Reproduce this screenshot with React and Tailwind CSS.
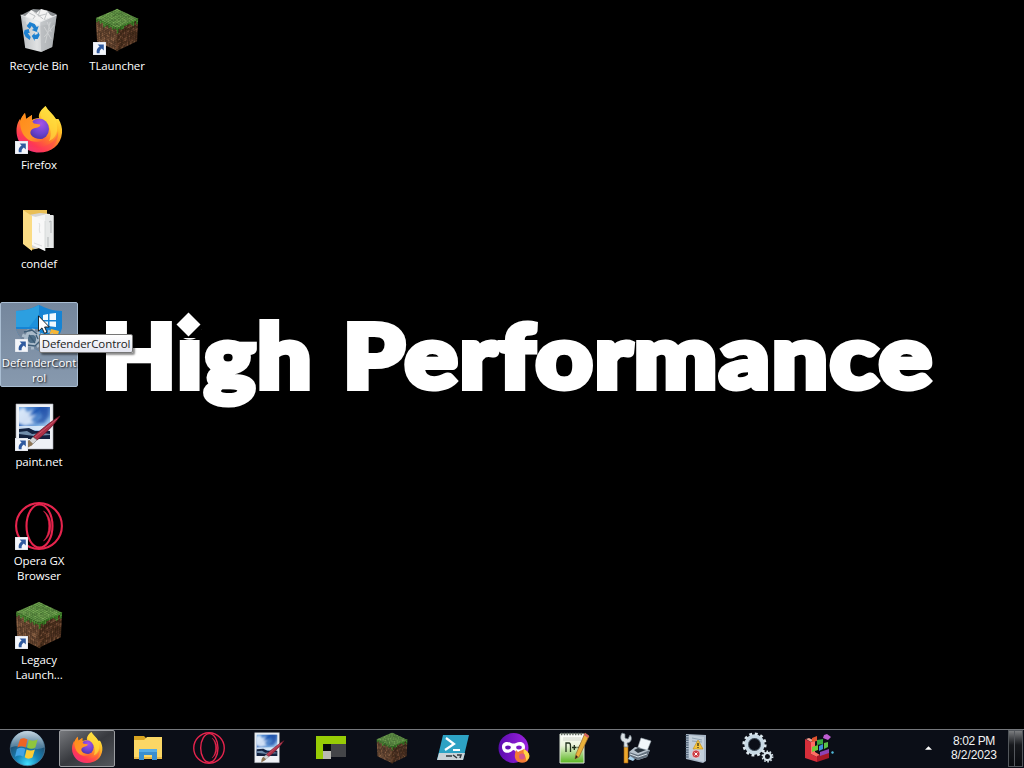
import React from "react";

function Shortcut() {
  return (
    <svg viewBox="0 0 13 13" className="absolute bottom-0 left-0 h-[13px] w-[13px]">
      <rect width="13" height="13" fill="#f4f6fa" stroke="#c3cad6" strokeWidth=".6" />
      <path d="M4.6 2.4H10.8V8.4L8.8 6.6C7 7.8 6.5 9 6.6 11.2H3.8C3.2 8.2 4.2 5.900 6.6 4.500Z" fill="#2f5a9f" />
    </svg>
  );
}

function noise(a, b, s) {
  const v = Math.sin(a * 127.1 + b * 311.7 + s * 74.7) * 43758.5453;
  return v - Math.floor(v);
}

function Face({ m, seed, grass, colors }) {
  const cells = [];
  for (let x = 0; x < 12; x++) {
    for (let y = 0; y < 12; y++) {
      const n = noise(x, y, seed);
      const depth = 1 + Math.floor(noise(x, 3, seed + 5) * 2.4);
      const set = grass && y < depth ? grass : colors;
      cells.push(
        <rect key={`${x}-${y}`} x={x} y={y} width="1.06" height="1.06" fill={set[Math.floor(n * set.length)]} />
      );
    }
  }
  return <g transform={m}>{cells}</g>;
}

function Cube({ className }) {
  return (
    <svg viewBox="0 0 48 48" className={className}>
      <Face m="matrix(1.917 -.833 1.917 .9 1 11)" seed={1} colors={["#6ea34d", "#639847", "#78ad56", "#699f4b", "#5c9042"]} />
      <Face m="matrix(1.917 .917 .1 2.1 1 11)" seed={2} grass={["#48852f", "#529138", "#407a2a"]} colors={["#6e4c35", "#7e583d", "#5b3e2a", "#8a6144", "#64442f"]} />
      <Face m="matrix(1.917 -.917 -.1 2.1 24 22)" seed={3} grass={["#3e8026", "#357322", "#4a8c32"]} colors={["#543524", "#67422c", "#452c1a", "#724d35", "#4b301e"]} />
    </svg>
  );
}

function RecycleBin() {
  return (
    <svg viewBox="0 0 48 48" className="h-12 w-12">
      <defs>
        <linearGradient id="bin" x1="0" x2="1">
          <stop offset="0" stopColor="#c6cacd" />
          <stop offset=".45" stopColor="#f1f3f4" />
          <stop offset="1" stopColor="#b7bbbe" />
        </linearGradient>
      </defs>
      <g transform="translate(1.200)">
        <path d="M5 8L17 2L30 3L40 7L39 15L24 19L7 14Z" fill="#8b8f92" />
        <path d="M9 9L15 3L20 6L25 2L31 4L34 8L38 10L34 18L10 17Z" fill="#f3f3f3" />
        <path d="M13 6L19 9L16 13M24 3L22 9L30 7M31 5L28 13L36 11M18 5L27 12" fill="none" stroke="#c0c3c5" />
        <path d="M4.500 8L24 15L40.500 8L36 40L25 45L9 41Z" fill="url(#bin)" fillOpacity=".93" />
        <path d="M24 15L40.500 8L36 40L25 45Z" fill="#a9adb0" fillOpacity=".55" />
        <path d="M4.500 8L24 15L40.500 8" fill="none" stroke="#e8eaeb" strokeWidth=".9" />
        <path d="M28 20L35 32M34 15L29 36M38 18L28 30M31 15L35 25" stroke="#d8dadb" strokeWidth="1" opacity=".7" />
        <g fill="#1d80d0" transform="translate(-1.500 -2)">
          <path d="M12 21L15 17L20 19L22 22L24 21L22 27L17 25L19 24L17 21L15 24Z" />
          <path d="M10 25L14 24L15 28L13 28L16 32L15 35L11 32L9 28Z" />
          <path d="M17 31L20 28L20 30L23 29L23 26L25 30L23 34L20 34L20 36Z" />
        </g>
      </g>
    </svg>
  );
}

function Firefox({ className, id }) {
  return (
    <svg viewBox="0 0 48 48" className={className}>
      <defs>
        <linearGradient id={`${id}a`} x1=".85" y1=".1" x2=".25" y2="1">
          <stop offset="0" stopColor="#fff14b" />
          <stop offset=".3" stopColor="#ffbd27" />
          <stop offset=".58" stopColor="#ff7130" />
          <stop offset=".8" stopColor="#ff3853" />
          <stop offset="1" stopColor="#e72d87" />
        </linearGradient>
        <radialGradient id={`${id}b`} cx=".6" cy=".25" r=".8">
          <stop offset="0" stopColor="#a553e6" />
          <stop offset=".6" stopColor="#6b42cf" />
          <stop offset="1" stopColor="#4b329f" />
        </radialGradient>
        <linearGradient id={`${id}c`} x1="0" y1="0" x2="1" y2="1">
          <stop offset="0" stopColor="#ff8a18" />
          <stop offset=".6" stopColor="#ff9728" />
          <stop offset="1" stopColor="#ff5937" />
        </linearGradient>
      </defs>
      <path d="M30.500 0C33 5 38 8 41 13L43.500 13C46 17 47.500 22 47 27C46 39 36.500 46.500 24 46.500C11 46.500 1.500 37 1.500 25C1.500 19 3.500 15 5 13L5.500 16C6.500 12 8 9 10 7L11 13L17 9L17 14C18 13 21 12 24 12C23 7 27 3 30.500 0Z" fill={`url(#${id}a)`} />
      <path d="M30.500 0C34 6 42 10 42 20C43 28 39 33 34 35C37 29 36 21 31 16C27 13 24 10 26 5C27 3 29 2 30.500 0Z" fill="#ffdc3f" opacity=".7" />
      <ellipse cx="24" cy="23" rx="10" ry="10.500" fill={`url(#${id}b)`} />
      <path d="M5 15C6.500 11 8 9 10 7L11 13L17 9L17 14.500C18 16 18 17 19 17.500L25 18.500C26 19.500 24 21.500 20 22C16 23 14.500 26 16 29C19 33 26 34 31 32C29 35 22 37 16 35C9 32 5 25 5 15Z" fill={`url(#${id}c)`} />
      <path d="M3 28C7 40 20 44 30 40C37 38 42 32 43 25C44 37 36 46 24 46C13 46 5 39 3 28Z" fill="#ff3d5b" opacity=".38" />
    </svg>
  );
}

function OpenFolder() {
  return (
    <svg viewBox="0 0 48 48" className="h-12 w-12">
      <path d="M8 5H32V41L16 45L8 38Z" fill="#e9bf57" />
      <path d="M14 10L25 8L35 9V40L20 44L14 41Z" fill="#d6d6d6" />
      <path d="M20 12L32 9L38.500 11V43L30 43L20 41Z" fill="#f4f4f4" />
      <path d="M30 10L38.500 10V43L30 43Z" fill="#e6e8e8" />
      <path d="M34 17L36 16V28M33 32V42" stroke="#b1b5b7" fill="none" />
      <path d="M8 5L17 11V46L8 39Z" fill="#fbdc85" />
      <path d="M17 40L30 46V16L21 12L17 11Z" fill="#f8f8f8" />
      <path d="M30 16V46" stroke="#cfd2d3" strokeWidth=".7" />
      <path d="M24 18C26 20 23 24 25 28M19 38L27 41" stroke="#d4d7d8" strokeWidth=".8" fill="none" />
    </svg>
  );
}

function Defender() {
  return (
    <svg viewBox="0 0 48 48" className="h-12 w-12">
      <path d="M1 7C10 7 18 4 24 1C31 4 38 7 47 7V24C45 34 36 40 24 47C12 40 3 34 1 24Z" fill="#1684d4" />
      <path d="M1 7C10 7 18 4 24 1V23H1Z" fill="#2c9fe0" />
      <path d="M1 23H24V10L14 23Z" fill="#1d91dc" />
      <path d="M28 11L33 10V16H28ZM34.500 9.800L41 9V16H34.500ZM28 17.500H33V22L28 21.500ZM34.500 17.500H41V23L34.500 22.300Z" fill="#f0faff" />
      <path d="M36 25L44 27L42 35L34 32Z" fill="#f5b638" />
      <path d="M1 25H24V47C12 41 4 35 1 25Z" fill="#74869b" />
      <g fill="none" stroke="#a9bac9">
        <circle cx="17" cy="35" r="6" strokeWidth="4" />
        <circle cx="17" cy="35" r="9" strokeWidth="3" strokeDasharray="3 3" />
        <circle cx="32" cy="32" r="5" strokeWidth="3" strokeDasharray="2 2" />
      </g>
      <circle cx="17" cy="35" r="4" fill="#4d6d87" />
      <path d="M9 28L17 26L22 30M12 41L20 42L25 37M14 31L20 39M21 31L23 35" stroke="#3d5c76" strokeWidth="1.300" fill="none" />
    </svg>
  );
}

function PaintNet({ className, id }) {
  return (
    <svg viewBox="0 0 48 48" className={className}>
      <defs>
        <linearGradient id={id} x1="0" y1="0" x2=".8" y2="1">
          <stop offset="0" stopColor="#78afe8" />
          <stop offset=".35" stopColor="#225bb5" />
          <stop offset=".65" stopColor="#7eb0e3" />
          <stop offset="1" stopColor="#dcebf8" />
        </linearGradient>
        <filter id={`${id}f`}><feGaussianBlur stdDeviation="1.500" /></filter>
        <clipPath id={`${id}k`}><path d="M4 4H35V36H4Z" /></clipPath>
      </defs>
      <path d="M1 1H38V46H1Z" fill="#eef1f6" stroke="#a8adb7" strokeWidth=".6" />
      <path d="M4 4H35V36H4Z" fill={`url(#${id})`} />
      <g clipPath={`url(#${id}k)`}>
        <path d="M2 8L9 4L12 9L19 6L14 13L22 11L16 17L20 20L10 23L2 20Z" fill="#eef6ff" opacity=".85" filter={`url(#${id}f)`} />
        <path d="M24 4L34 3L34 13L29 20L20 20L27 14Z" fill="#1a49a3" opacity=".7" filter={`url(#${id}f)`} />
      </g>
      <path d="M4 23H35V27H4Z" fill="#e8f2fb" opacity=".8" />
      <path d="M4 26L14 25L20 28L35 28V36H4Z" fill="#12213f" />
      <path d="M4 29L12 28L17 31L28 30L35 31V32L19 33L4 31Z" fill="#6f8cab" />
      <path d="M45 13C38 17 24 28 18 34L22 37C30 31 39 22 45 13Z" fill="#aa3148" stroke="#6d1627" strokeWidth=".8" />
      <path d="M42 16L20 34" stroke="#d35c6e" strokeWidth=".8" />
      <path d="M18 34L22 37L18 41L14 38Z" fill="#d5d6d8" stroke="#777" strokeWidth=".6" />
      <path d="M14 37L18 41C16 44 14 43 11 46C11 42 11 39 14 37Z" fill="#8e7655" />
    </svg>
  );
}

function Opera({ className }) {
  return (
    <svg viewBox="0 0 48 48" className={className} fill="none" stroke="#e6244d">
      <circle cx="24" cy="24" r="22.900" strokeWidth="2.100" />
      <ellipse cx="24.500" cy="24" rx="13" ry="21.500" strokeWidth="2.100" />
      <path d="M28.500 9C38.500 15 38.500 33 28.500 39C35.500 32 35.500 16 28.500 9Z" fill="#e6244d" strokeWidth=".5" />
    </svg>
  );
}

function StartOrb() {
  return (
    <svg viewBox="0 0 40 40" className="h-[37px] w-[37px]">
      <defs>
        <radialGradient id="orb" cx=".5" cy=".95" r=".95">
          <stop offset="0" stopColor="#42e0ff" />
          <stop offset=".35" stopColor="#1784b8" />
          <stop offset=".7" stopColor="#205478" />
          <stop offset="1" stopColor="#5b7d95" />
        </radialGradient>
        <linearGradient id="shine" x1="0" y1="0" x2="0" y2="1">
          <stop offset="0" stopColor="#dbe7ef" stopOpacity=".85" />
          <stop offset="1" stopColor="#93b4c8" stopOpacity=".35" />
        </linearGradient>
      </defs>
      <circle cx="20" cy="20" r="18.600" fill="url(#orb)" stroke="#4f7d9c" strokeWidth=".8" />
      <path d="M2 19A18 18 0 0 1 38 19C27 24 12 14 2 19Z" fill="url(#shine)" />
      <path d="M12 10C15 8 17 9 20 10L18 19C15 17 12 17 9 19Z" fill="#ed6424" />
      <path d="M21.500 10.500C25 12 28 12 31 10L28.500 19C25 21 22 20.500 19.500 19Z" fill="#8fc63d" />
      <path d="M8.500 20.500C12 18.500 15 19 17.700 20.500L15.500 29C12 27 9.500 27.500 6.500 29Z" fill="#42a3e5" />
      <path d="M19 21C22 22.500 25 22.500 28 21L25.500 29.500C22 32 19 31 17 29.500Z" fill="#fbcc36" />
    </svg>
  );
}

function Explorer() {
  return (
    <svg viewBox="0 0 32 32" className="h-8 w-8">
      <path d="M2 4H12L15 7H30V27H2Z" fill="#d9a421" />
      <path d="M2 8H12L15 5H30V27H2Z" fill="#fbd765" />
      <path d="M2 25H30V27H2Z" fill="#e8b947" />
      <path d="M7 17H25V28H20V23H12V28H7Z" fill="#398fd0" />
      <path d="M7 17H25V20H7Z" fill="#56ade7" />
    </svg>
  );
}

function GreenApp() {
  return (
    <svg viewBox="0 0 32 32" className="h-8 w-8">
      <path d="M1 4H31V12H8V27H1Z" fill="#98cc06" />
      <path d="M16 12H31V25H16Z" fill="#444548" />
      <path d="M9 12H16V19H9Z" fill="#07090b" />
      <path d="M8 19H16V27H8Z" fill="#b9b9b3" />
    </svg>
  );
}

function PowerShell() {
  return (
    <svg viewBox="0 0 32 32" className="h-8 w-8">
      <path d="M6 3H32L26 28H0Z" fill="#2da2c4" />
      <path d="M2 21H28L26 28H0Z" fill="#cad2d7" />
      <path d="M9 6L17 12L8 18M16 18H23" fill="none" stroke="#fff" strokeWidth="2.200" />
      <path d="M9 24H15M16 23L20 26M20 23H24L23 26" fill="none" stroke="#30373c" strokeWidth="1.500" />
    </svg>
  );
}

function MaskApp() {
  return (
    <svg viewBox="0 0 32 32" className="h-8 w-8">
      <defs><linearGradient id="mask"><stop stopColor="#5b0cae" /><stop offset="1" stopColor="#9d22e0" /></linearGradient></defs>
      <circle cx="15.500" cy="16" r="15" fill="url(#mask)" />
      <path d="M4 15C4 10 9 9 13 11Q15.500 12 18 11C22 9 27 10 27 15C27 21 21 23 17 19Q15.500 17 14 19C9 23 4 20 4 15Z" fill="#fff" />
      <ellipse cx="10" cy="15.500" rx="2.800" ry="1.900" fill="#6512b5" />
      <ellipse cx="21" cy="15.500" rx="2.800" ry="1.900" fill="#7b18c5" />
      <path d="M18 18L20 20C23 18 25 18 26 17C31 20 32 23 31 26C29 32 21 32 18 28C16 25 17 21 18 18Z" fill="#f47b35" />
      <path d="M26 17C31 20 32 23 31 26L28 29C29 24 24 22 26 17Z" fill="#ffd447" />
      <circle cx="24" cy="24.500" r="3" fill="#d3578c" />
    </svg>
  );
}

function NotepadPlus() {
  return (
    <svg viewBox="0 0 32 32" className="h-8 w-8">
      <defs><linearGradient id="npp" x2="0" y2="1"><stop stopColor="#fff" /><stop offset=".4" stopColor="#eaf4d9" /><stop offset="1" stopColor="#59b51f" /></linearGradient></defs>
      <path d="M1 2H25V31H1Z" fill="url(#npp)" stroke="#dfe5d9" />
      <path d="M2 2H24" stroke="#626b63" strokeWidth="2.500" strokeDasharray="1.400 1.400" />
      <path d="M4 6H22M4 8H22" stroke="#b8bdb6" strokeWidth=".6" />
      <path d="M7 20V11H10Q11.500 11 11.500 14V20M13 15.500H17.500M15.300 13V18M18.500 15.500H23M20.800 13V18" fill="none" stroke="#20301b" strokeWidth="1.300" />
      <path d="M26 1L30 4L20 25L16 27L17 22Z" fill="#eab13b" stroke="#99662b" strokeWidth=".7" />
      <path d="M26 1L30 4L29 6L25 3Z" fill="#cf6265" />
      <path d="M16 27L17 23L19 25Z" fill="#2e2219" />
    </svg>
  );
}

function Devices() {
  return (
    <svg viewBox="0 0 32 32" className="h-8 w-8">
      <path d="M4 13H8V31H4Z" fill="#eca72c" stroke="#9b5d12" strokeWidth=".6" />
      <path d="M2 1L5 2L5 6L8 7L10 3C13 6 11 11 7 11L8 15H4L4 10C0 9 0 4 2 1Z" fill="#dce2e6" stroke="#6e7b85" strokeWidth=".7" />
      <path d="M18 15L21 6L31 9L27 19Z" fill="#f2f6fa" stroke="#a3aeb7" strokeWidth=".6" />
      <path d="M9 20L15 15L30 18L27 25L18 28L9 24Z" fill="#b7c2cc" />
      <path d="M9 20L18 23L30 18L27 25L18 28L9 24Z" fill="#64717e" />
      <path d="M14 18L18 16L26 18L18 21Z" fill="#29333d" />
      <path d="M10 22L18 25L27 22" stroke="#dce4ea" fill="none" />
      <path d="M10 24L15 27L13 29L8 27Z" fill="#a9d1ed" />
    </svg>
  );
}

function EventLog() {
  return (
    <svg viewBox="0 0 32 32" className="h-8 w-8">
      <path d="M5 2L25 3V29L22 31L5 27Z" fill="#a7b5c5" />
      <path d="M8 3L23 5V30L8 26Z" fill="#c3cfdb" />
      <path d="M6 3V27" stroke="#415468" strokeWidth="3" strokeDasharray="1 1.400" />
      <path d="M11 6L21 8M11 9L21 10" stroke="#8598a9" strokeWidth=".8" />
      <path d="M17 8L22 17H12Z" fill="#f5c43b" stroke="#c18a16" strokeWidth=".6" />
      <path d="M17 11V14M17 15V16" stroke="#332d1b" strokeWidth="1.300" />
      <circle cx="15" cy="22" r="4" fill="#cb3f46" stroke="#fff" strokeWidth=".5" />
      <path d="M13.500 20.500L16.500 23.500M16.500 20.500L13.500 23.500" stroke="#fff" />
    </svg>
  );
}

function Gears() {
  return (
    <svg viewBox="0 0 32 32" className="h-8 w-8" fill="none">
      <circle cx="12.500" cy="12.500" r="8.300" stroke="#c7d8e4" strokeWidth="3.800" />
      <circle cx="12.500" cy="12.500" r="10.800" stroke="#dce7ee" strokeWidth="2.600" strokeDasharray="2.830 2.830" />
      <circle cx="12.500" cy="12.500" r="6" stroke="#798f9f" strokeWidth=".5" />
      <circle cx="25.500" cy="24.500" r="3.600" stroke="#d8e4eb" strokeWidth="2.200" />
      <circle cx="25.500" cy="24.500" r="5.200" stroke="#d8e4eb" strokeWidth="1.500" strokeDasharray="1.630 1.630" />
    </svg>
  );
}

function Defrag() {
  return (
    <svg viewBox="0 0 32 32" className="h-8 w-8">
      <path d="M2 7L8 10V22L14 25V30L2 26Z" fill="#d62e3a" />
      <path d="M8 10L12 8V20L17 23L14 25L8 22Z" fill="#ff6e64" />
      <path d="M14 24L26 20V26L14 30Z" fill="#a71828" />
      <path d="M3 7L6 6L10 8L8 10Z" fill="#f49a8c" />
      <path d="M9 6L14 4V9L9 10Z" fill="#e0522f" />
      <path d="M14 8L20 7V12L14 13Z" fill="#38a942" />
      <path d="M9 15L15 13V18L9 20Z" fill="#6ecb38" />
      <path d="M16 14L20 12V17L16 19Z" fill="#3c8ede" />
      <path d="M21 11L25 10V15L21 17Z" fill="#59c04a" />
      <path d="M17 20L26 17V21L17 24Z" fill="#8f43b5" />
      <path d="M21 3L24 2L28 5L25 8L20 6Z" fill="#be5ed1" />
      <path d="M29 19L31 20L30 22L28 21Z" fill="#4fb6d7" />
    </svg>
  );
}

function DesktopItem({ label, shortcut, selected, children }) {
  return (
    <div className={`flex h-[85px] w-[78px] flex-col items-center rounded-[2px] border ${selected ? "border-[#a9bdd2] bg-linear-to-b from-[#75879d] to-[#8799ae]" : "border-transparent"}`}>
      <div className="relative mt-px h-12 w-12 shrink-0">
        {children}
        {shortcut && <Shortcut />}
      </div>
      <div className="mt-[3px] w-[78px] text-center text-[11.5px] leading-[15px] tracking-[-0.1px] text-white [text-shadow:1px_1px_2px_#000]">
        {label.map((line) => (
          <div key={line} className="whitespace-nowrap">{line}</div>
        ))}
      </div>
    </div>
  );
}

const tasks = [
  <Explorer />,
  <Opera className="h-8 w-8" />,
  <PaintNet className="h-8 w-8" id="pnSmall" />,
  <GreenApp />,
  <Cube className="h-8 w-8" />,
  <PowerShell />,
  <MaskApp />,
  <NotepadPlus />,
  <Devices />,
  <EventLog />,
  <Gears />,
  <Defrag />,
];

export default function App() {
  return (
    <div className="relative flex h-[768px] w-[1024px] flex-col overflow-hidden bg-black font-['Open_Sans','Noto_Sans',sans-serif]">
      <div className="absolute top-[301px] left-[102px] flex font-['Lato',sans-serif] text-[88px] leading-[106px] font-black tracking-[2px] whitespace-nowrap text-white [-webkit-text-stroke:6px_white]">
        <span className="relative w-[241px] shrink-0">
          <span className="inline-block origin-left scale-x-[1.085]">High</span>
          <span className="absolute top-[10px] left-[73px] flex h-[27px] w-[26px] items-center justify-center bg-black">
            <span className="size-[17px] rotate-45 bg-white" />
          </span>
        </span>
        <span className="inline-block origin-left scale-x-[1.118]">Performance</span>
      </div>

      <main className="relative flex grow items-start pt-[5px]">
        <div className="flex flex-col gap-[14px]">
          <DesktopItem label={["Recycle Bin"]}><RecycleBin /></DesktopItem>
          <DesktopItem label={["Firefox"]} shortcut><Firefox className="h-12 w-12" id="ffLarge" /></DesktopItem>
          <DesktopItem label={["condef"]}><OpenFolder /></DesktopItem>
          <DesktopItem label={["DefenderCont", "rol"]} shortcut selected><Defender /></DesktopItem>
          <DesktopItem label={["paint.net"]} shortcut><PaintNet className="h-12 w-12" id="pnLarge" /></DesktopItem>
          <DesktopItem label={["Opera GX", "Browser"]} shortcut><Opera className="h-12 w-12" /></DesktopItem>
          <DesktopItem label={["Legacy", "Launch..."]} shortcut><Cube className="h-12 w-12" /></DesktopItem>
        </div>
        <DesktopItem label={["TLauncher"]} shortcut><Cube className="mx-auto h-[46px] w-[44px]" /></DesktopItem>
      </main>

      <div className="absolute top-[334px] left-[39px] flex h-[19px] w-[94px] items-center justify-center rounded-[2px] border border-[#767676] bg-linear-to-b from-white to-[#e4e5f0] text-[11.5px] tracking-[-0.1px] whitespace-nowrap text-[#222] shadow-[2px_2px_2px_rgba(0,0,0,0.45)]">
        DefenderControl
      </div>
      <svg viewBox="0 0 12 19" className="absolute top-[315px] left-[38px] h-[19px] w-[12px]">
        <path d="M.5 .8V16.200L4 12.900L6.500 18.300L9 17.200L6.600 12H11.300Z" fill="#fff" stroke="#111" strokeWidth=".9" />
      </svg>

      <footer className="relative flex h-[39px] shrink-0 items-center border-t border-[#74777b] bg-[#0b0e17] pb-0.5">
        <button className="flex w-[56px] justify-center pr-[2px]"><StartOrb /></button>
        <div className="flex w-[61px] justify-center">
          <button className="flex h-[37px] w-[56px] items-center justify-center rounded-[2px] border border-[#9b9da1] bg-linear-to-br from-[#77797d] via-[#37393e] to-[#54575c]">
            <Firefox className="h-8 w-8" id="ffSmall" />
          </button>
        </div>
        {tasks.map((icon, i) => (
          <button key={i} className="flex w-[61px] justify-center">{icon}</button>
        ))}
        <div className="flex grow items-center justify-end">
          <svg viewBox="0 0 8 4" className="mr-[18px] h-1 w-[7px]"><path d="M4 0L8 4H0Z" fill="#fff" /></svg>
          <div className="mr-[10px] w-[48px] text-center font-['Liberation_Sans',sans-serif] text-[12px] leading-[14px] whitespace-nowrap text-[#f3f3f3]">
            <div className="tracking-[-0.4px]">8:02 PM</div>
            <div className="tracking-[-0.1px]">8/2/2023</div>
          </div>
          <div className="mr-px flex h-[37px] w-[15px] border border-[#53575c] bg-linear-to-b from-[#7c7e80] via-[#17191d] via-40% to-[#090b0f]">
            <div className="w-[6px] border-r border-[#54575c]" />
          </div>
        </div>
      </footer>
    </div>
  );
}
